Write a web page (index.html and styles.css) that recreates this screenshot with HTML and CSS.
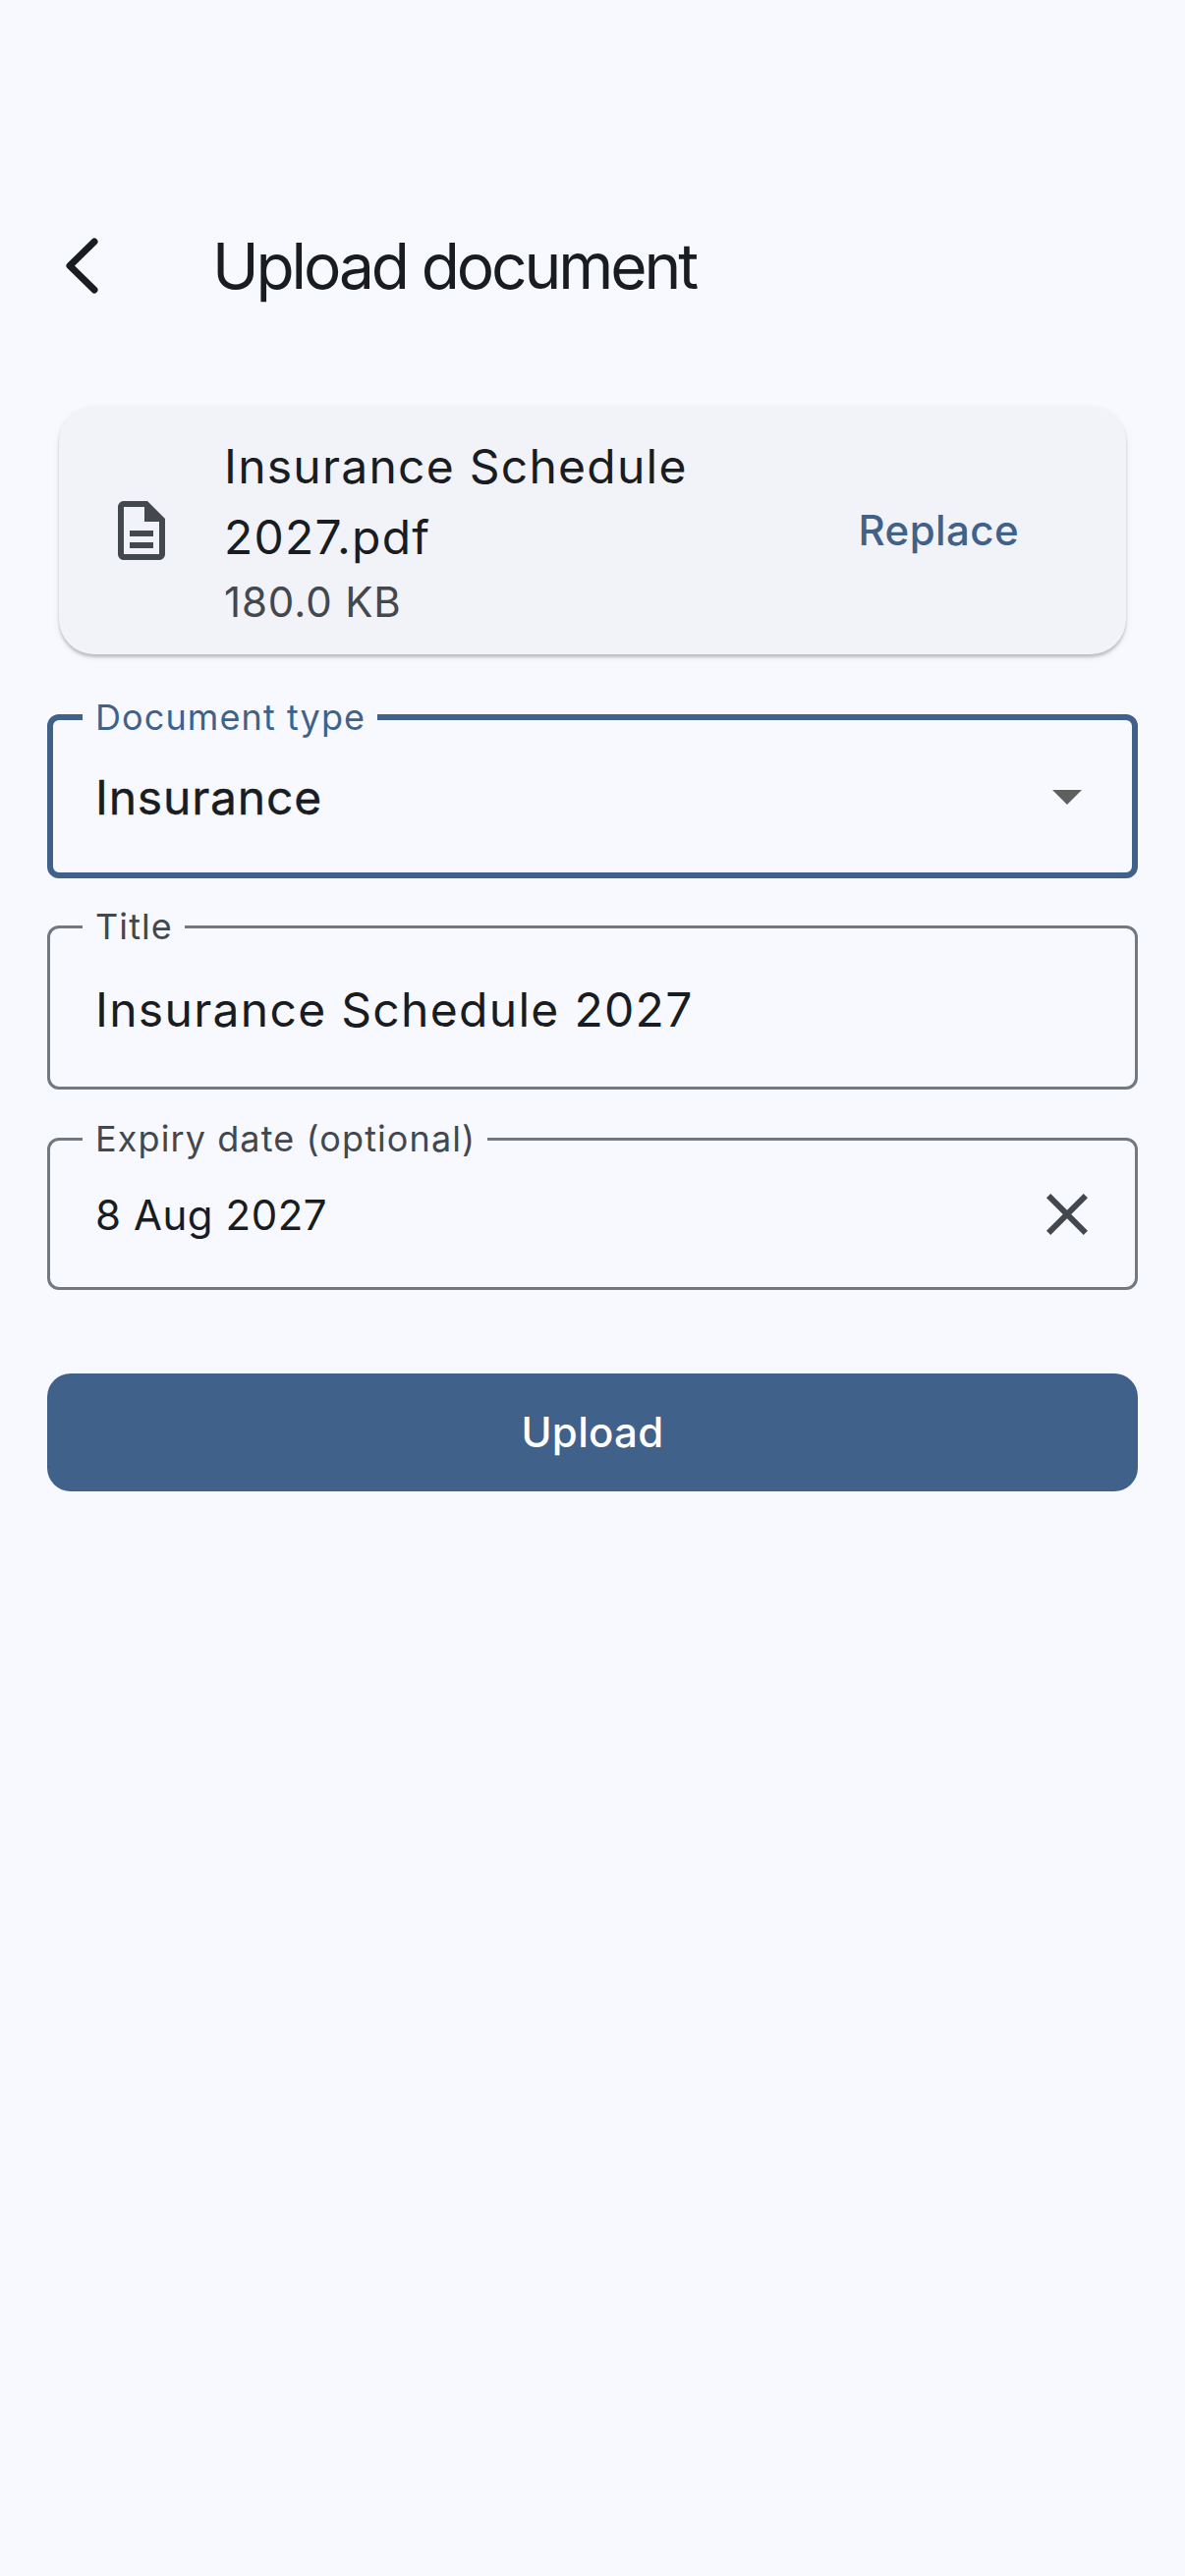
FILE: index.html
```html
<!DOCTYPE html>
<html lang="en">
<head>
    <meta charset="UTF-8">
    <meta name="viewport" content="width=device-width, initial-scale=1.0">
    <title>Upload document</title>
    <link rel="stylesheet" href="styles.css">
</head>
<body>
    <header class="app-bar">
        <button class="back-btn" aria-label="Back">
            <svg width="36" height="60" viewBox="0 0 36 60"><path d="M30 5 L5 29.5 L30 54" fill="none" stroke="#191c20" stroke-width="7" stroke-linecap="round" stroke-linejoin="round"/></svg>
        </button>
        <h1 class="app-title">Upload document</h1>
    </header>

    <main class="content">
        <section class="file-card">
            <svg class="file-icon" width="72" height="72" viewBox="0 0 24 24"><path fill="#43474e" d="M8 16h8v2H8zm0-4h8v2H8zm6-10H6c-1.1 0-2 .9-2 2v16c0 1.1.89 2 1.99 2H18c1.1 0 2-.9 2-2V8l-6-6zm4 18H6V4h7v5h5v11z"/></svg>
            <div class="file-info">
                <div class="file-name">Insurance Schedule 2027.pdf</div>
                <div class="file-size">180.0 KB</div>
            </div>
            <button class="replace-btn">Replace</button>
        </section>

        <fieldset class="field field-focused">
            <legend>Document type</legend>
            <div class="field-row">
                <span class="field-value value-strong">Insurance</span>
                <svg class="field-icon icon-drop" width="72" height="72" viewBox="0 0 24 24"><path fill="#5f5f5f" d="M7 10l5 5 5-5z"/></svg>
            </div>
        </fieldset>

        <fieldset class="field field-title">
            <legend>Title</legend>
            <div class="field-row">
                <span class="field-value">Insurance Schedule 2027</span>
            </div>
        </fieldset>

        <fieldset class="field field-date">
            <legend>Expiry date (optional)</legend>
            <div class="field-row">
                <span class="field-value value-small">8 Aug 2027</span>
                <svg class="field-icon" width="72" height="72" viewBox="0 0 24 24"><path fill="#43474e" d="M19 6.41 17.59 5 12 10.59 6.41 5 5 6.41 10.59 12 5 17.59 6.41 19 12 13.41 17.59 19 19 17.59 13.41 12z"/></svg>
            </div>
        </fieldset>

        <button class="upload-btn">Upload</button>
    </main>
</body>
</html>
```

FILE: styles.css
```css
* {
    box-sizing: border-box;
}

body {
    margin: 0;
    min-height: 2622px;
    background-color: #f8f9ff;
    color: #191c20;
    font-family: Inter, "Noto Sans", sans-serif;
}

button {
    font-family: inherit;
    border: none;
    background: none;
    padding: 0;
}

.app-bar {
    display: flex;
    align-items: center;
    height: 96px;
    margin-top: 223px;
    padding-left: 66px;
}

.back-btn {
    display: flex;
    width: 150px;
}

.app-title {
    margin: 0;
    font-size: 64px;
    font-weight: 400;
    letter-spacing: -3.1px;
    line-height: 96px;
}

.content {
    display: flex;
    flex-direction: column;
    padding: 94px 48px 0;
}

.file-card {
    display: flex;
    align-items: center;
    height: 253px;
    margin: 0 12px;
    padding: 0 109px 0 48px;
    background-color: #f1f3f9;
    border-radius: 36px;
    box-shadow: 0 3px 3px rgba(0, 0, 0, 0.2), 0 3px 9px rgba(0, 0, 0, 0.06);
}

.file-icon {
    flex: none;
}

.file-info {
    flex: 1;
    margin-left: 48px;
    min-width: 0;
    padding: 3px 30px 0 0;
}

.file-name {
    font-size: 48px;
    line-height: 72px;
    letter-spacing: 1.25px;
}

.file-size {
    font-size: 42px;
    line-height: 60px;
    letter-spacing: 0.9px;
    color: #43474e;
}

.replace-btn {
    font-size: 42px;
    font-weight: 500;
    letter-spacing: 0.4px;
    color: #3f618a;
}

.field {
    margin: 31px 0 0;
    padding: 0 33px 0 46px;
    min-width: 0;
    border: 3px solid #73777f;
    border-radius: 12px;
}

.field legend {
    margin-left: -13px;
    padding: 0 12px 0 13px;
    font-size: 36px;
    line-height: 36px;
    letter-spacing: 1.1px;
    color: #43474e;
}

.field-focused {
    margin-top: 46px;
    padding: 0 30px 0 43px;
    height: 182px;
    border: 6px solid #3f618a;
}

.field-focused legend {
    color: #3f618a;
}

.field-title {
    height: 184px;
}

.field-date {
    height: 172px;
    margin-top: 32px;
}

.field-row {
    display: flex;
    align-items: center;
    justify-content: space-between;
    height: 132px;
}

.field-focused .field-row {
    height: 127px;
}

.field-date .field-row {
    height: 118px;
}

.icon-drop {
    margin-top: -3px;
}

.field-value {
    font-size: 48px;
    letter-spacing: 1.3px;
}

.value-strong {
    letter-spacing: 0.8px;
    -webkit-text-stroke: 0.4px #191c20;
}

.value-small {
    font-size: 42px;
    letter-spacing: 0.55px;
}

.upload-btn {
    height: 120px;
    margin-top: 85px;
    padding-bottom: 2px;
    background-color: #3f618a;
    border-radius: 24px;
    color: #fff;
    font-size: 42px;
    font-weight: 500;
    letter-spacing: 0.3px;
}
```
